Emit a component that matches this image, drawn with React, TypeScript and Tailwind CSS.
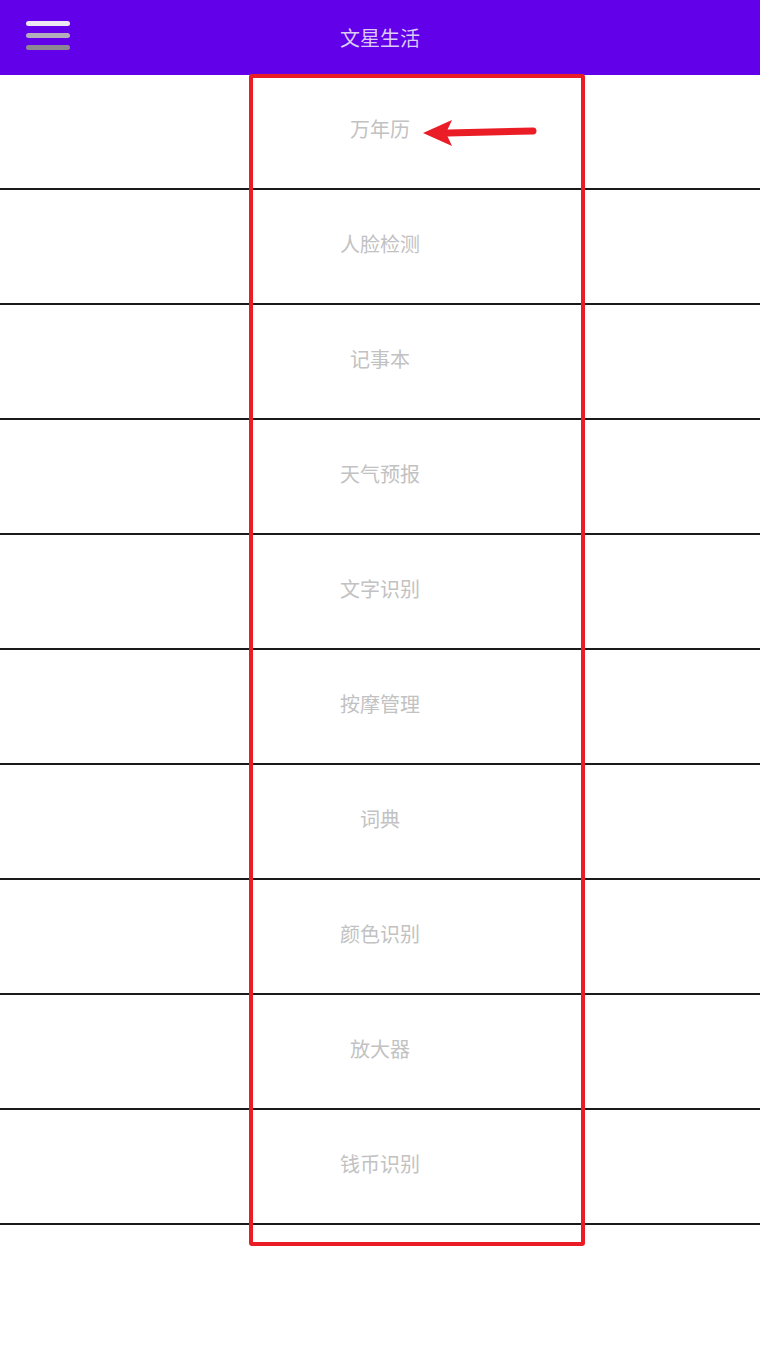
import React from "react";

const items = ["万年历", "人脸检测", "记事本", "天气预报", "文字识别", "按摩管理", "词典", "颜色识别", "放大器", "钱币识别"];

export default function App() {
  return (
    <div
      className="relative w-[760px] h-[1355px] bg-white overflow-hidden"
      style={{ fontFamily: '"Noto Sans CJK SC", "Noto Sans", sans-serif' }}
    >
      <header className="h-[75px] bg-[#6200ea] flex items-center relative">
        <div className="absolute left-[26px] top-[21px] flex flex-col gap-[7px]">
          <div className="w-[44px] h-[5px] rounded-full bg-[#ece8f2]" />
          <div className="w-[44px] h-[5px] rounded-full bg-[#b3adbb]" />
          <div className="w-[44px] h-[5px] rounded-full bg-[#8c8792]" />
        </div>
        <div className="w-full text-center text-[20px] text-[#dccbf6]">文星生活</div>
      </header>
      <ul>
        {items.map((t) => (
          <li
            key={t}
            className="h-[115px] pb-[6px] border-b-2 border-[#1a1a1a] flex items-center justify-center text-[20px] text-[#c2c2c2]"
          >
            {t}
          </li>
        ))}
      </ul>
      <div className="absolute left-[249px] top-[74px] w-[336px] h-[1172px] border-[4px] border-[#ea1d27] rounded-[3px] pointer-events-none" />
      <svg className="absolute left-0 top-0 pointer-events-none" width="760" height="1355">
        <line x1="533" y1="131" x2="448" y2="133" stroke="#ea1d27" strokeWidth="7" strokeLinecap="round" />
        <polygon points="423,133 452,120 446,133 452,146" fill="#ea1d27" />
      </svg>
    </div>
  );
}
